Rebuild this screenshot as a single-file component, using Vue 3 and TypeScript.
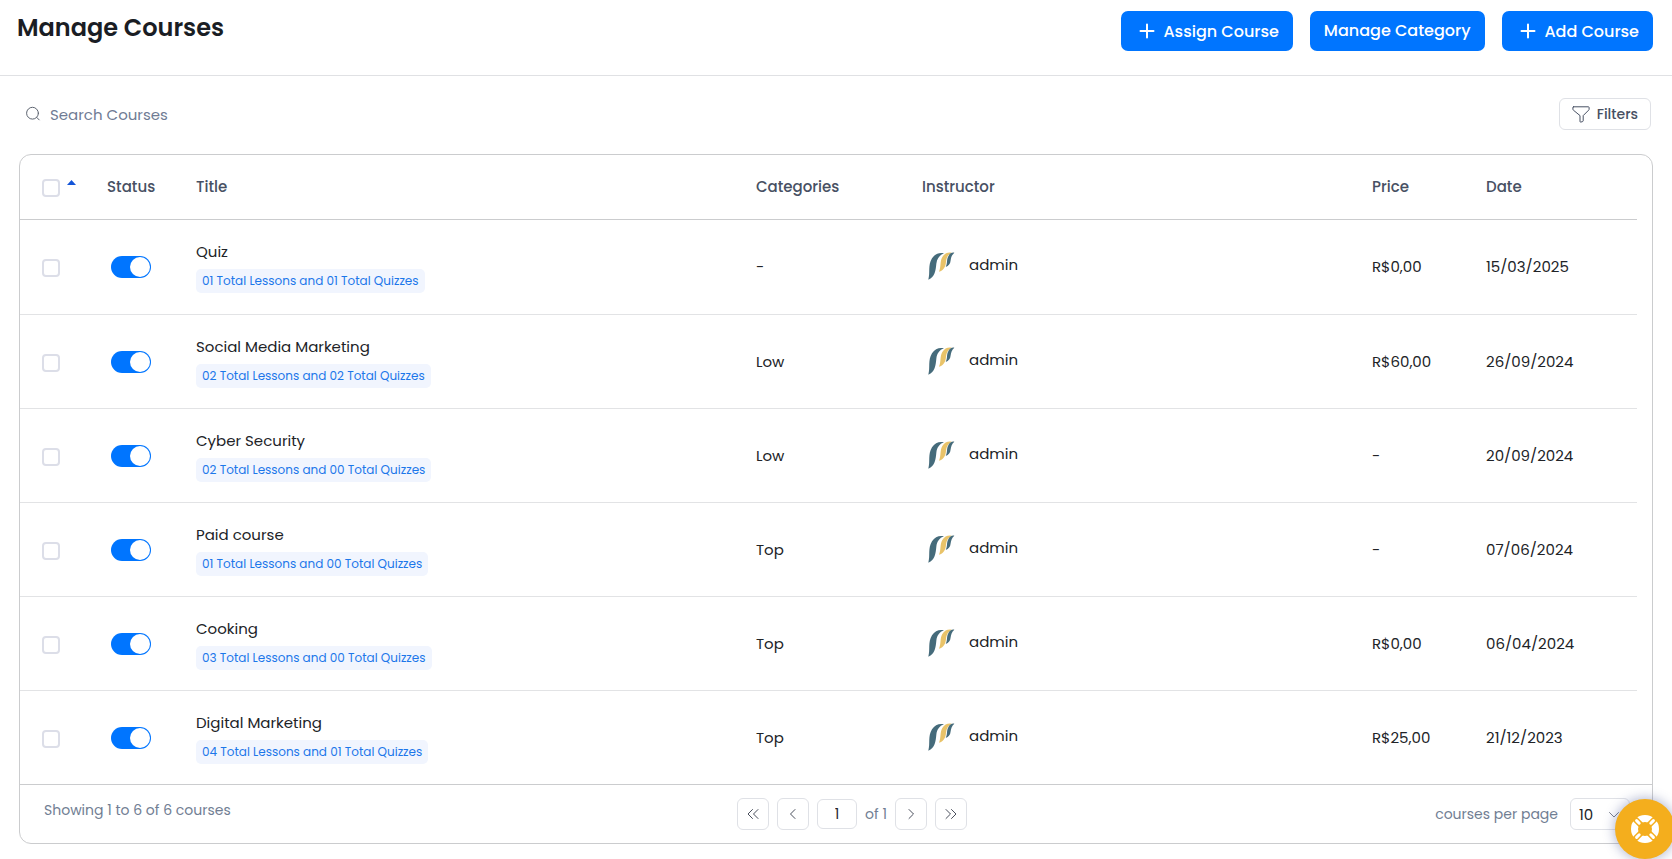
<script setup lang="ts">
import { ref, computed } from 'vue'

interface Course {
  title: string
  lessons: string
  quizzes: string
  category: string
  instructor: string
  price: string
  date: string
  active: boolean
  selected: boolean
}

const make = (
  title: string,
  lessons: string,
  quizzes: string,
  category: string,
  price: string,
  date: string,
): Course => ({ title, lessons, quizzes, category, price, date, instructor: 'admin', active: true, selected: false })

const courses = ref<Course[]>([
  make('Quiz', '01', '01', '-', 'R$0,00', '15/03/2025'),
  make('Social Media Marketing', '02', '02', 'Low', 'R$60,00', '26/09/2024'),
  make('Cyber Security', '02', '00', 'Low', '-', '20/09/2024'),
  make('Paid course', '01', '00', 'Top', '-', '07/06/2024'),
  make('Cooking', '03', '00', 'Top', 'R$0,00', '06/04/2024'),
  make('Digital Marketing', '04', '01', 'Top', 'R$25,00', '21/12/2023'),
])

const search = ref('')
const page = ref('1')
const perPage = ref('10')

const allSelected = computed({
  get: () => courses.value.every((c) => c.selected),
  set: (value: boolean) => courses.value.forEach((c) => (c.selected = value)),
})
</script>

<template>
  <div class="page">
    <header class="top">
      <h1>Manage Courses</h1>
      <div class="actions">
        <button type="button" class="primary with-icon">
          <svg width="16" height="16" viewBox="0 0 16 16" aria-hidden="true"><path d="M8 1.500v13M1.500 8h13" /></svg>
          Assign Course
        </button>
        <button type="button" class="primary text-only">Manage Category</button>
        <button type="button" class="primary with-icon">
          <svg width="16" height="16" viewBox="0 0 16 16" aria-hidden="true"><path d="M8 1.500v13M1.500 8h13" /></svg>
          Add Course
        </button>
      </div>
    </header>

    <div class="tools">
      <label class="search">
        <svg width="16" height="16" viewBox="0 0 16 16" aria-hidden="true">
          <circle cx="7.5" cy="7.2" r="5.9" />
          <path d="M11.7 11.4 14.2 13.900" />
        </svg>
        <input v-model="search" type="text" placeholder="Search Courses" aria-label="Search Courses" />
      </label>
      <button type="button" class="filters">
        <svg width="18" height="18" viewBox="0 0 18 18" aria-hidden="true">
          <path d="M1.6 1.8h14.8q.7 0 .7.7v1.6q0 .6-.4 1L11.2 10.6v5.2q0 .5-.5.7l-1.800.6q-.9.2-.9-.7v-5.8L1.3 5.1q-.4-.4-.4-1V2.5q0-.7.7-.7z" />
        </svg>
        Filters
      </button>
    </div>

    <main class="card">
      <div class="table-wrap">
        <table>
          <colgroup>
            <col class="c-check" />
            <col class="c-status" />
            <col class="c-title" />
            <col class="c-cat" />
            <col class="c-inst" />
            <col class="c-price" />
            <col class="c-date" />
          </colgroup>
          <thead>
            <tr>
              <th class="check">
                <span class="check-head">
                  <input v-model="allSelected" type="checkbox" class="box" aria-label="Select all courses" />
                  <svg width="9" height="5" viewBox="0 0 9 5" aria-hidden="true"><path d="M0 5 4.5 0 9 5z" /></svg>
                </span>
              </th>
              <th>Status</th>
              <th>Title</th>
              <th>Categories</th>
              <th>Instructor</th>
              <th>Price</th>
              <th>Date</th>
            </tr>
          </thead>
          <tbody>
            <tr v-for="course in courses" :key="course.title">
              <td class="check">
                <input v-model="course.selected" type="checkbox" class="box" :aria-label="'Select ' + course.title" />
              </td>
              <td class="status">
                <input v-model="course.active" type="checkbox" role="switch" class="switch" :aria-label="'Status of ' + course.title" />
              </td>
              <td>
                <div class="title">{{ course.title }}</div>
                <span class="badge">{{ course.lessons }} Total Lessons and {{ course.quizzes }} Total Quizzes</span>
              </td>
              <td>{{ course.category }}</td>
              <td>
                <div class="instructor">
                  <svg width="30" height="30" viewBox="0 0 90 90" aria-hidden="true">
                    <path class="slate" d="M4 86C10 64 2 43 15 22 24 8 37 4 51 7 37 12 30 23 28 38 26 58 24 77 4 86z" />
                    <path class="gold" d="M36 62C43 47 38 31 46 18 53 7 62 3 74 5 63 11 58 20 57 32 56 48 49 58 36 62z" />
                    <path class="slate" d="M56 48C62 37 58 25 64 16 68 7 74 4 82 5 74 12 72 20 71 28 70 39 65 45 56 48z" />
                  </svg>
                  <span>{{ course.instructor }}</span>
                </div>
              </td>
              <td>{{ course.price }}</td>
              <td>{{ course.date }}</td>
            </tr>
          </tbody>
        </table>
      </div>

      <footer class="foot">
        <p class="summary">Showing 1 to 6 of 6 courses</p>
        <nav class="pager" aria-label="Pagination">
          <button type="button" aria-label="First page">
            <svg width="14" height="14" viewBox="0 0 14 14" aria-hidden="true"><path d="M6.5 2.5 2 7l4.500 4.500M12 2.500 7.500 7 12 11.500" /></svg>
          </button>
          <button type="button" aria-label="Previous page">
            <svg width="14" height="14" viewBox="0 0 14 14" aria-hidden="true"><path d="M9 2.500 4.500 7 9 11.500" /></svg>
          </button>
          <input v-model="page" type="text" aria-label="Page number" />
          <span>of 1</span>
          <button type="button" aria-label="Next page">
            <svg width="14" height="14" viewBox="0 0 14 14" aria-hidden="true"><path d="M5 2.500 9.500 7 5 11.500" /></svg>
          </button>
          <button type="button" aria-label="Last page">
            <svg width="14" height="14" viewBox="0 0 14 14" aria-hidden="true"><path d="M2 2.500 6.500 7 2 11.500M7.500 2.500 12 7l-4.500 4.500" /></svg>
          </button>
        </nav>
        <div class="per-page">
          <label for="per-page">courses per page</label>
          <div class="select">
            <select id="per-page" v-model="perPage">
              <option>10</option>
              <option>25</option>
              <option>50</option>
            </select>
            <svg width="12" height="12" viewBox="0 0 12 12" aria-hidden="true"><path d="M1.500 3.500 6 8l4.500-4.500" /></svg>
          </div>
        </div>
      </footer>
    </main>

    <button type="button" class="help" aria-label="Help">
      <svg width="30" height="30" viewBox="0 0 30 30" aria-hidden="true">
        <circle class="ring" cx="15" cy="15" r="10.500" />
        <path class="gap" d="M4 4 11.500 11.500M18.500 18.500 26 26M26 4 18.500 11.500M11.500 18.500 4 26" />
        <path class="rope" d="M6.600 6.600 9.200 9.200M20.800 20.800l2.600 2.600M23.400 6.600l-2.600 2.600M9.200 20.800l-2.600 2.600" />
      </svg>
    </button>
  </div>
</template>

<style>
body {
  margin: 0;
  background: #fff;
}
</style>

<style scoped>
.page {
  font-family: Poppins, Inter, 'Open Sans', sans-serif;
  font-size: 15px;
  color: #212327;
  background: #fff;
  padding-bottom: 14px;
  overflow-x: hidden;
}

button,
input,
select {
  font: inherit;
  color: inherit;
  box-sizing: border-box;
  margin: 0;
}

button {
  cursor: pointer;
}

svg {
  display: block;
  flex: none;
  fill: none;
  stroke: currentColor;
  stroke-linecap: round;
  stroke-linejoin: round;
}

.top {
  display: flex;
  justify-content: space-between;
  align-items: flex-start;
  box-sizing: border-box;
  height: 76px;
  padding: 11px 19px 0 17px;
  border-bottom: 1px solid #e0e1e4;
}

h1 {
  margin: 0;
  font-size: 24px;
  font-weight: 600;
  line-height: 34px;
  color: #1a1d24;
}

.actions {
  display: flex;
  gap: 17px;
}

.primary {
  display: flex;
  align-items: center;
  gap: 8px;
  height: 40px;
  padding: 0 14px;
  border: 0;
  border-radius: 7px;
  background: #0075ff;
  color: #fff;
  font-size: 16px;
  font-weight: 500;
}

.with-icon {
  padding: 0 14px 0 18px;
}

.text-only {
  padding: 0 15px 2px 14px;
}

.primary svg {
  stroke-width: 2;
}

.tools {
  display: flex;
  justify-content: space-between;
  align-items: center;
  padding: 22px 21px 24px 25px;
}

.search {
  display: flex;
  align-items: center;
  gap: 9px;
  flex: 1;
  color: #5d6470;
}

.search input {
  flex: 1;
  max-width: 300px;
  height: 32px;
  padding: 0;
  border: 0;
  outline: 0;
  background: none;
}

.search input::placeholder {
  color: #6f7b94;
  opacity: 1;
}

.filters {
  display: flex;
  align-items: center;
  gap: 7px;
  height: 32px;
  padding: 0 12px;
  border: 1px solid #dfe1e6;
  border-radius: 6px;
  background: #fff;
  color: #475063;
  font-size: 14px;
  font-weight: 500;
}

.card {
  margin: 0 19px;
  border: 1px solid #cbccce;
  border-radius: 12px;
}

.table-wrap {
  padding-right: 15px;
}

table {
  width: 100%;
  table-layout: fixed;
  border-collapse: separate;
  border-spacing: 0;
}

.c-check {
  width: 87px;
}

.c-status {
  width: 89px;
}

.c-cat {
  width: 166px;
}

.c-inst {
  width: 450px;
}

.c-price {
  width: 114px;
}

.c-date {
  width: 151px;
}

th,
td {
  box-sizing: border-box;
}

th {
  height: 65px;
  padding: 0 0 2px;
  border-bottom: 1px solid #cbccce;
  text-align: left;
  font-weight: 500;
  color: #475063;
}

td {
  height: 94px;
  padding: 0;
  border-bottom: 1px solid #e2e3e5;
  line-height: 22px;
}

tbody tr:first-child td {
  height: 95px;
}

tbody tr:last-child td {
  height: 93px;
  border-bottom: 0;
}

.check {
  padding: 2px 0 0 22px;
}

.check-head {
  display: flex;
  gap: 7px;
}

.check-head svg {
  margin-top: 1px;
  fill: #1355d8;
  stroke: none;
}

.box {
  display: block;
  width: 18px;
  height: 18px;
  appearance: none;
  border: 2px solid #dcdee8;
  border-radius: 4px;
  background: #fff;
}

.box:checked {
  border-color: #0075ff;
  background: #0075ff;
}

.status {
  padding-left: 4px;
}

.switch {
  display: flex;
  align-items: center;
  width: 40px;
  height: 22px;
  padding: 0 1px;
  appearance: none;
  border-radius: 11px;
  background: #c4c9d4;
}

.switch::before {
  content: '';
  width: 20px;
  height: 20px;
  border-radius: 10px;
  background: #fff;
}

.switch:checked {
  justify-content: flex-end;
  background: #0075ff;
}

.title {
  margin-bottom: 6px;
}

.badge {
  display: inline-block;
  padding: 0 6px;
  border-radius: 5px;
  background: #f1f5fe;
  color: #1c77ea;
  font-size: 12px;
  line-height: 24px;
  vertical-align: top;
}

.instructor {
  display: flex;
  align-items: center;
  gap: 12px;
  padding: 0 0 4px 5px;
}

.instructor svg {
  margin-top: 2px;
  stroke: none;
}

.slate {
  fill: #456b7b;
}

.gold {
  fill: #e9c369;
}

.foot {
  display: grid;
  grid-template-columns: 1fr auto 1fr;
  align-items: center;
  height: 58px;
  border-top: 1px solid #cbccce;
  color: #717e93;
  font-size: 14px;
}

.summary {
  margin: 0 0 8px 24px;
}

.pager {
  display: flex;
  align-items: center;
  gap: 8px;
  padding-left: 32px;
}

.pager button,
.pager input {
  display: grid;
  place-items: center;
  width: 32px;
  height: 32px;
  padding: 0;
  border: 1px solid #dfe1e6;
  border-radius: 6px;
  background: #fff;
  color: #4a4f5c;
}

.pager input {
  width: 40px;
  height: 30px;
  text-align: center;
  color: #212327;
}

.per-page {
  display: flex;
  justify-content: flex-end;
  align-items: center;
  gap: 12px;
  padding-right: 22px;
}

.select {
  position: relative;
}

.select select {
  display: block;
  width: 60px;
  height: 32px;
  padding: 0 8px;
  appearance: none;
  border: 1px solid #dfe1e6;
  border-radius: 6px;
  background: #fff;
  color: #212327;
  font-size: 15px;
}

.select svg {
  position: absolute;
  right: 10px;
  top: 11px;
  stroke: #7c818c;
  pointer-events: none;
}

.help {
  position: fixed;
  right: -3px;
  bottom: 0;
  display: grid;
  place-items: center;
  width: 60px;
  height: 60px;
  padding: 0;
  border: 0;
  border-radius: 30px;
  background: #f4ae1d;
  box-shadow: 0 0 12px 1px rgba(60, 75, 140, 0.4);
}

.ring {
  stroke: #fff;
  stroke-width: 7;
}

.gap {
  stroke: #f4ae1d;
  stroke-width: 6;
  stroke-linecap: butt;
}

.rope {
  stroke: #fff;
  stroke-width: 3;
}
</style>
